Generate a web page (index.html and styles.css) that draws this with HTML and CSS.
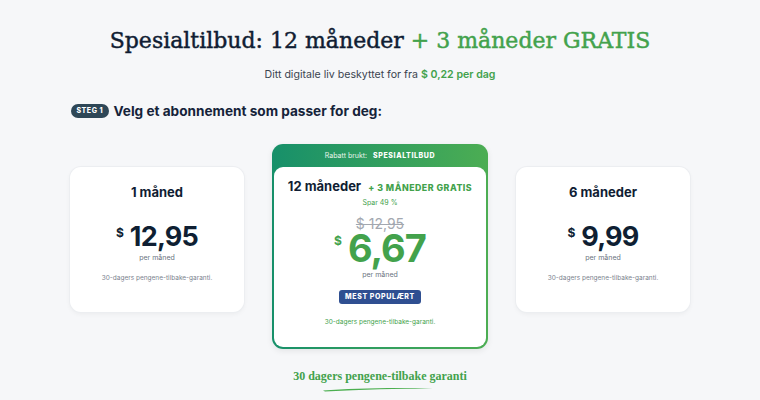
FILE: index.html
```html
<!DOCTYPE html>
<html lang="no">
<head>
<meta charset="utf-8">
<link rel="stylesheet" href="styles.css">
</head>
<body>
<div class="page">
  <h1 class="title">Spesialtilbud: 12 måneder <span class="green">+ 3 måneder GRATIS</span></h1>
  <p class="sub">Ditt digitale liv beskyttet for fra <b class="green">$ 0,22 per dag</b></p>
  <div class="step">
    <span class="badge">STEG 1</span>
    <span class="step-title">Velg et abonnement som passer for deg:</span>
  </div>
  <div class="cards">
    <div class="card side">
      <div class="plan">1 måned</div>
      <div class="price"><span class="cur">$</span><span class="amount">12,95</span></div>
      <div class="per">per måned</div>
      <div class="guar">30-dagers pengene-tilbake-garanti.</div>
    </div>
    <div class="card featured">
      <div class="banner">Rabatt brukt: <b>SPESIALTILBUD</b></div>
      <div class="inner">
        <div class="plan-row"><span class="plan">12 måneder</span><span class="bonus">+ 3 MÅNEDER GRATIS</span></div>
        <div class="save">Spar 49 %</div>
        <div class="old">$ 12,95</div>
        <div class="price big"><span class="cur">$</span><span class="amount">6,67</span></div>
        <div class="per">per måned</div>
        <span class="popular">MEST POPULÆRT</span>
        <div class="guar g">30-dagers pengene-tilbake-garanti.</div>
      </div>
    </div>
    <div class="card side">
      <div class="plan">6 måneder</div>
      <div class="price"><span class="cur">$</span><span class="amount">9,99</span></div>
      <div class="per">per måned</div>
      <div class="guar">30-dagers pengene-tilbake-garanti.</div>
    </div>
  </div>
  <div class="money">
    <div class="money-text">30 dagers pengene-tilbake garanti</div>
    <svg class="brush" width="112" height="6" viewBox="0 0 112 6"><path d="M1 4.6 C 30 2.2, 70 1.2, 111 2.4 C 75 2.6, 40 3.4, 3 5.6 Z" fill="#4caf50"/></svg>
  </div>
</div>
</body>
</html>
```
FILE: styles.css
```css
html, body { margin: 0; padding: 0; }
body {
  background: #f6f7f9;
  font-family: Inter, "Noto Sans", sans-serif;
  color: #0f1f33;
  width: 760px;
  height: 400px;
  overflow: hidden;
}
.page { padding-top: 23px; text-align: center; }
.green { color: #43a24c; }
.title {
  margin: 0;
  font-family: "DejaVu Serif", serif;
  font-weight: 400;
  font-size: 22px;
  line-height: 36px;
  color: #101d33;
  -webkit-text-stroke: 0.45px currentColor;
}
.sub {
  margin: 9px 0 0;
  font-size: 10.6px;
  line-height: 14px;
  color: #3b4450;
}
.sub b { font-weight: 600; }
.step {
  display: flex;
  align-items: center;
  gap: 5px;
  padding-left: 71px;
  margin-top: 19px;
}
.badge {
  background: #2e4757;
  color: #fff;
  font-size: 7px;
  font-weight: 800;
  letter-spacing: 0.5px;
  border-radius: 7px;
  padding: 3px 5.5px;
  line-height: 8px;
}
.step-title {
  font-size: 13.6px;
  font-weight: 700;
  color: #15233a;
  line-height: 20px;
}
.cards {
  display: flex;
  justify-content: center;
  align-items: flex-start;
  gap: 28px;
  margin-top: 23px;
}
.card {
  background: #fff;
  border-radius: 11px;
}
.side {
  width: 174px;
  height: 145px;
  margin-top: 23px;
  box-shadow: 0 0 0 1px #eceef1, 0 2px 5px rgba(0,0,0,0.05);
  padding-top: 16px;
  box-sizing: border-box;
}
.plan {
  font-size: 13px;
  font-weight: 700;
  line-height: 18px;
  color: #101d33;
}
.price {
  display: flex;
  justify-content: center;
  align-items: flex-start;
  margin-top: 25px;
  color: #0f1f33;
}
.cur { font-size: 12px; font-weight: 700; line-height: 14px; margin-top: 0; margin-right: 6px; }
.amount { font-size: 27px; font-weight: 700; line-height: 22px; letter-spacing: -0.8px; }
.per { font-size: 7px; color: #6b7380; line-height: 10px; margin-top: 5px; }
.guar { font-size: 6.5px; color: #7a828e; line-height: 10px; margin-top: 10px; }
.featured {
  width: 216px;
  height: 205px;
  background: linear-gradient(90deg, #17906a, #4cad53);
  padding: 0 2px 2px;
  box-sizing: border-box;
  display: flex;
  flex-direction: column;
  box-shadow: 0 2px 6px rgba(0,0,0,0.08);
}
.banner {
  height: 23px;
  line-height: 23px;
  font-size: 7px;
  color: #e8f5ea;
}
.banner b { font-weight: 800; letter-spacing: 0.6px; margin-left: 4px; color: #fff; }
.inner {
  flex: 1;
  background: #fff;
  border-radius: 9px;
  padding-top: 10px;
  display: flex;
  flex-direction: column;
  align-items: center;
}
.plan-row { display: flex; align-items: baseline; gap: 7px; }
.bonus { font-size: 8.8px; font-weight: 800; color: #43a24c; letter-spacing: 0.5px; }
.save { font-size: 7px; color: #43a24c; margin-top: 3px; line-height: 10px; }
.old {
  font-size: 14px;
  color: #a3a8b0;
  text-decoration: line-through;
  margin-top: 9px;
  line-height: 14px;
}
.big { margin-top: 1px; color: #43a24c; }
.big .cur { font-size: 12px; margin-top: 2px; margin-right: 6px; }
.big .amount { font-size: 38px; line-height: 32px; letter-spacing: -1px; }
.big + .per { margin-top: 6px; }
.popular {
  margin-top: 10px;
  background: #2f4f91;
  color: #fff;
  font-size: 7px;
  font-weight: 800;
  letter-spacing: 0.6px;
  border-radius: 3px;
  padding: 3px 6px;
  line-height: 8px;
}
.guar.g { color: #43a24c; margin-top: 13px; }
.money { margin-top: 20px; display: flex; flex-direction: column; align-items: center; }
.money-text {
  font-family: "Liberation Serif", serif;
  font-size: 12px;
  font-weight: 700;
  color: #43a24c;
  line-height: 14px;
}
.brush { margin-top: 3px; margin-left: -4px; }
```
